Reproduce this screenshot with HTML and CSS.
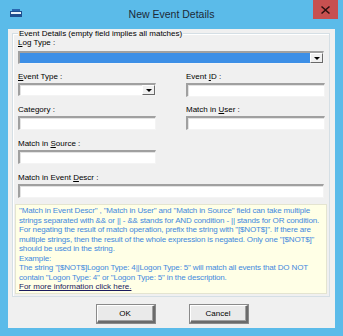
FILE: index.html
```html
<!DOCTYPE html>
<html lang="en">
<head>
    <meta charset="UTF-8">
    <title>New Event Details</title>
    <link rel="stylesheet" href="styles.css">
</head>
<body>
    <div class="window">
        <div class="titlebar">
            <div class="app-icon">
                <svg width="12" height="9" viewBox="0 0 12 9">
                    <rect x="0" y="2" width="12" height="6" fill="#1f4f8f"/>
                    <rect x="1" y="3" width="10" height="2" fill="#e8f2fb"/>
                    <rect x="2" y="0" width="8" height="2" fill="#2a66b0"/>
                </svg>
            </div>
            <div class="title">New Event Details</div>
            <div class="close-btn">
                <svg width="9" height="8" viewBox="0 0 9 8">
                    <path d="M1 0 L4.5 3 L8 0 L9 1 L5.5 4 L9 7 L8 8 L4.5 5 L1 8 L0 7 L3.5 4 L0 1 Z" fill="#2b1010"/>
                </svg>
            </div>
        </div>

        <div class="client">
            <div class="group">
                <div class="group-title">Event Details (empty field implies all matches)</div>

                <div class="field field-log">
                    <label><u>L</u>og Type :</label>
                    <div class="combo combo-selected">
                        <span class="combo-value"></span>
                        <span class="combo-arrow"></span>
                    </div>
                </div>

                <div class="row row-first">
                    <div class="field">
                        <label><u>E</u>vent Type :</label>
                        <div class="combo">
                            <span class="combo-value"></span>
                            <span class="combo-arrow"></span>
                        </div>
                    </div>
                    <div class="field">
                        <label>Event <u>I</u>D :</label>
                        <input type="text" class="textbox">
                    </div>
                </div>

                <div class="row">
                    <div class="field">
                        <label>Category :</label>
                        <input type="text" class="textbox">
                    </div>
                    <div class="field">
                        <label>Match in <u>U</u>ser :</label>
                        <input type="text" class="textbox">
                    </div>
                </div>

                <div class="row">
                    <div class="field">
                        <label>Match in <u>S</u>ource :</label>
                        <input type="text" class="textbox">
                    </div>
                </div>

                <div class="field field-descr">
                    <label>Match in Event <u>D</u>escr :</label>
                    <input type="text" class="textbox">
                </div>

                <div class="info">
                    <p class="info-text">
                        <span>"Match in Event Descr" , "Match in User" and "Match in Source" field can take multiple</span>
                        <span>strings separated with &amp;&amp; or || - &amp;&amp; stands for AND condition - || stands for OR condition.</span>
                        <span>For negating the result of match operation, prefix the string with "[$NOT$]". If there are</span>
                        <span>multiple strings, then the result of the whole expression is negated. Only one "[$NOT$]"</span>
                        <span>should be used in the string.</span>
                        <span>Example:</span>
                        <span>The string "[$NOT$]Logon Type: 4||Logon Type: 5" will match all events that DO NOT</span>
                        <span>contain "Logon Type: 4" or "Logon Type: 5" in the description.</span>
                    </p>
                    <a href="#" class="more-link">For more information click here.</a>
                </div>
            </div>

            <div class="buttons">
                <button class="btn">OK</button>
                <button class="btn">Cancel</button>
            </div>
        </div>
    </div>
</body>
</html>
```

FILE: styles.css
```css
* {
    box-sizing: border-box;
    margin: 0;
    padding: 0;
}
body {
    width: 343px;
    height: 336px;
    overflow: hidden;
    font-family: "Liberation Sans", Arial, sans-serif;
    font-size: 8px;
    color: #000;
}
.window {
    width: 343px;
    height: 336px;
    background-color: #5bbbe9;
    padding: 0 8px 8px 8px;
    display: flex;
    flex-direction: column;
}
.titlebar {
    height: 29px;
    display: flex;
    align-items: flex-start;
}
.app-icon {
    width: 28px;
    padding-top: 9px;
    padding-left: 2px;
}
.title {
    flex: 1;
    text-align: center;
    font-size: 10.5px;
    color: #1b2a38;
    padding-top: 8px;
    padding-right: 6px;
}
.close-btn {
    width: 25px;
    height: 19px;
    margin-right: -3px;
    background-color: #c75050;
    display: flex;
    align-items: center;
    justify-content: center;
}
.client {
    flex: 1;
    background-color: #f0f0f0;
    padding: 4px 5px 0 4px;
}
/* group box */
.group {
    border: 1px solid #d5dfe5;
    box-shadow: inset 1px 1px 0 #fff;
    padding: 0 5px 0 5px;
    height: 264px;
}
.group-title {
    width: fit-content;
    background-color: #f0f0f0;
    margin-top: -5px;
    margin-left: 0;
    padding: 0 1px;
    height: 9px;
    line-height: 9px;
}
.field label {
    display: block;
    line-height: 10px;
    height: 10px;
    margin-bottom: 1px;
    white-space: nowrap;
}
.field-log label {
    margin-bottom: 3px;
}
.row {
    display: grid;
    grid-template-columns: 138px 139px;
    column-gap: 30px;
    margin-top: 8px;
}
.row + .row + .row {
    margin-top: 9px;
}
.field-descr {
    margin-top: 9px;
}
.textbox,
.combo {
    display: flex;
    width: 100%;
    height: 14px;
    background-color: #fff;
    border-style: solid;
    border-width: 2px 1px 1px 2px;
    border-color: #a0a0a0 #f4f4f4 #f4f4f4 #a0a0a0;
    box-shadow: inset 1px 1px 0 #e3e3e3;
    font-family: inherit;
    font-size: 8px;
    outline: none;
}
.combo {
    height: 13px;
    justify-content: space-between;
}
.combo-selected .combo-value {
    flex: 1;
    background-color: #3d8fe6;
}
.combo-arrow {
    width: 13px;
    background-color: #f0f0f0;
    border-style: solid;
    border-width: 1px;
    border-color: #fff #696969 #696969 #fff;
    display: flex;
    align-items: center;
    justify-content: center;
}
.combo-arrow::after {
    content: "";
    border-left: 3px solid transparent;
    border-right: 3px solid transparent;
    border-top: 3px solid #000;
}
/* help text */
.info {
    margin: 6px -3px 0 -3px;
    background-color: #ffffe6;
    border: 1px solid #e4e4d0;
    padding: 1px 3px 0 3px;
    height: 90px;
    overflow: hidden;
}
.info-text {
    color: #4289de;
    line-height: 9.5px;
    letter-spacing: -0.15px;
}
.info-text span {
    display: block;
    white-space: nowrap;
}
.more-link {
    display: block;
    margin-top: 0;
    line-height: 9px;
    color: #1b1b5e;
    text-decoration: underline;
}
.buttons {
    display: flex;
    justify-content: center;
    gap: 35px;
    padding-top: 8px;
    padding-left: 2px;
}
.btn {
    width: 58px;
    height: 18px;
    background-color: #eaeaea;
    border-style: solid;
    border-width: 1px 2px 2px 1px;
    border-color: #fff #6b6b6b #6b6b6b #fff;
    box-shadow: inset -1px -1px 0 #a0a0a0, 0 0 0 1px #8a8a8a;
    font-family: inherit;
    font-size: 8px;
    color: #000;
}
```
